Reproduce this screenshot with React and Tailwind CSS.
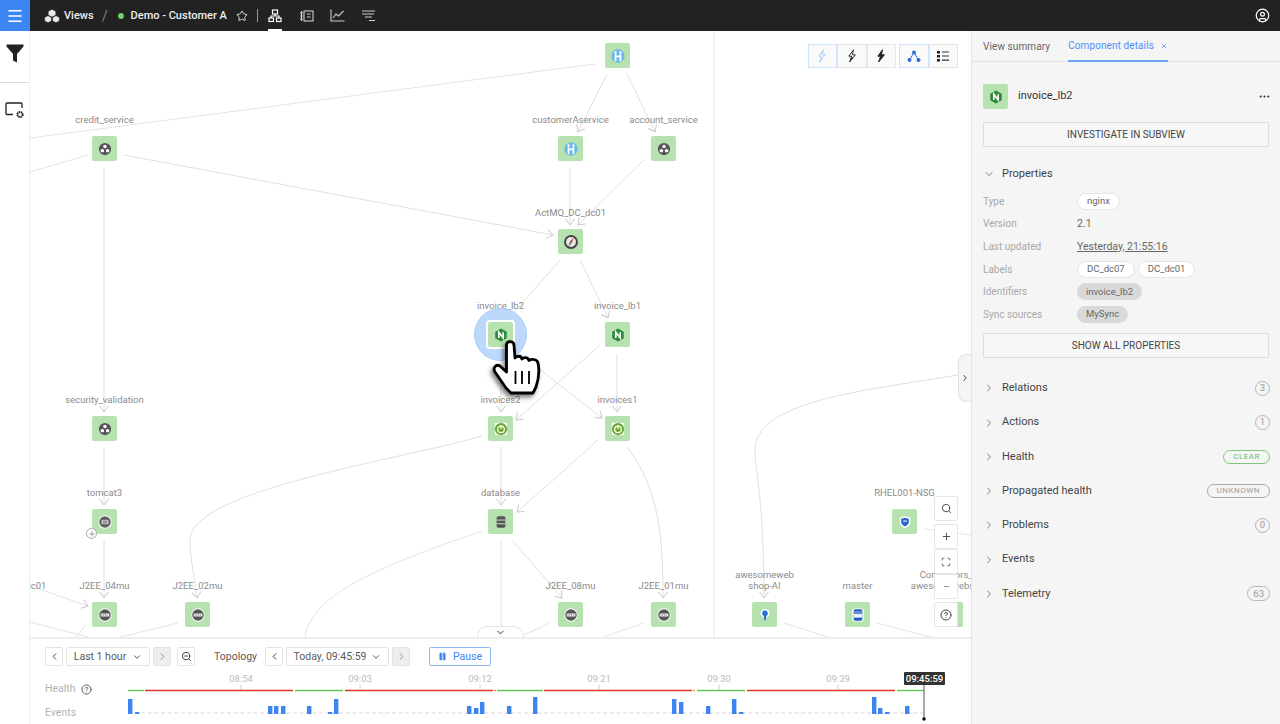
import React from 'react';
import { ChevronDown, ChevronLeft, ChevronRight, CircleHelp, CircleUser, Ellipsis, Menu, Minus, Pause, Plus, Scan, Search, Star, X, ZoomOut } from 'lucide-react';

// canvas origin on the page
const OX = 30;
const OY = 31;

const nodes = [
    { x: 617, y: 56, icon: 'people' },
    { x: 104, y: 149, icon: 'service', label: ['credit_service'] },
    { x: 570, y: 149, icon: 'people', label: ['customerAservice'] },
    { x: 663, y: 149, icon: 'service', label: ['account_service'] },
    { x: 570, y: 242, icon: 'compass', label: ['ActMQ_DC_dc01'] },
    { x: 500, y: 335, icon: 'nginx', label: ['invoice_lb2'], selected: true },
    { x: 617, y: 335, icon: 'nginx', label: ['invoice_lb1'] },
    { x: 104, y: 429, icon: 'service', label: ['security_validation'] },
    { x: 500, y: 429, icon: 'spring', label: ['invoices2'] },
    { x: 617, y: 429, icon: 'spring', label: ['invoices1'] },
    { x: 104, y: 522, icon: 'tomcat', label: ['tomcat3'], plus: true },
    { x: 500, y: 522, icon: 'database', label: ['database'] },
    { x: 904, y: 522, icon: 'shield', label: ['RHEL001-NSG'] },
    { x: 104, y: 615, icon: 'vm', label: ['J2EE_04mu'] },
    { x: 197, y: 615, icon: 'vm', label: ['J2EE_02mu'] },
    { x: 570, y: 615, icon: 'vm', label: ['J2EE_08mu'] },
    { x: 663, y: 615, icon: 'vm', label: ['J2EE_01mu'] },
    { x: 764, y: 615, icon: 'pin', label: ['awesomeweb', 'shop-AI'] },
    { x: 857, y: 615, icon: 'sql', label: ['master'] },
    { x: 950, y: 615, icon: 'pin', label: ['Connectors_AI', 'awesomewebshop'] },
    { x: 27, y: 615, label: ['DC_dc01'] },
];

const arrows = [
    'M607,74 L578,132', 'M627,74 L655,132', 'M570,168 L570,225', 'M645,159 L578,225', 'M124,155 L553,235',
    'M104,168 L104,412', 'M560,260 L509,318', 'M580,260 L608,318', 'M520,354 L602,418',
    'M600,345 L516,420', 'M617,354 L617,412', 'M501,354 L501,412', 'M104,447 L104,505', 'M104,540 L104,598',
    'M482,436 C400,460 190,490 190,540 C190,560 195,580 197,598', 'M501,447 L501,505', 'M598,440 L517,512',
    'M627,447 C660,490 663,540 663,598', 'M512,540 L562,598', 'M36,588 L88,606',
    'M958,375 C870,390 755,400 755,450 C755,470 764,500 764,598',
];

const plainLines = [
    'M30,138 L595,64', 'M30,172 L88,155', 'M501,540 L501,638', 'M482,531 C400,560 310,590 305,638', 'M30,622 L92,638', 'M86,625 L75,638',
    'M178,623 L117,638', 'M524,635 L550,623', 'M600,638 L644,623', 'M783,623 L832,638', 'M877,623 L934,638',
    'M924,529 L971,535', 'M714,31 L714,638',
];

const health = [
    ['#62c554', 128, 144], ['#e2352b', 145, 293], ['#62c554', 295, 343], ['#e2352b', 345, 493], ['#f0a030', 494, 496],
    ['#62c554', 497, 543], ['#e2352b', 544, 692], ['#f0a030', 693, 695], ['#62c554', 697, 745], ['#e2352b', 747, 895],
    ['#62c554', 897, 924],
];

const ticks = [[241, '08:54'], [360, '09:03'], [480, '09:12'], [599, '09:21'], [719, '09:30'], [838, '09:39']];

const bars = [
    [128, 15], [135, 2], [268, 8], [274, 8], [281, 8], [307, 8], [328, 2], [334, 15], [467, 8], [474, 6], [480, 12],
    [507, 8], [533, 17], [672, 15], [679, 12], [706, 8], [732, 15], [739, 2], [872, 17], [878, 6], [885, 2], [905, 8],
];

const sections = [
    { name: 'Relations', count: '3' },
    { name: 'Actions', count: '1' },
    { name: 'Health', status: 'CLEAR', green: true },
    { name: 'Propagated health', status: 'UNKNOWN' },
    { name: 'Problems', count: '0' },
    { name: 'Events' },
    { name: 'Telemetry', count: '63' },
];

function NodeIcon({ type, size = 14 }) {
    const props = { width: size, height: size, viewBox: '0 0 16 16' };
    switch (type) {
        case 'nginx':
            return (
                <svg {...props}>
                    <path d="M8 0.5 14.6 4.2 V11.8 L8 15.5 1.4 11.8 V4.2 Z" fill="#2e8b3d" />
                    <path d="M5.5 11.3 V4.8 L10.5 11.3 V4.8" fill="none" stroke="#fff" strokeWidth="1.9" />
                </svg>
            );
        case 'people':
            return (
                <svg {...props}>
                    <circle cx="8" cy="8" r="7.6" fill="#6db8ea" />
                    <circle cx="5.2" cy="4" r="1.4" fill="#fff" />
                    <circle cx="10.8" cy="4" r="1.4" fill="#fff" />
                    <path d="M5.2 6 V14 M10.8 6 V14 M5.2 8.5 H10.8" stroke="#fff" strokeWidth="2" fill="none" />
                </svg>
            );
        case 'service':
            return (
                <svg {...props}>
                    <circle cx="8" cy="8" r="7" fill="#555" />
                    <circle cx="8" cy="5" r="2" fill="#fff" />
                    <circle cx="5" cy="10" r="2" fill="#fff" />
                    <circle cx="11" cy="10" r="2" fill="#fff" />
                </svg>
            );
        case 'compass':
            return (
                <svg {...props}>
                    <circle cx="8" cy="8" r="6.8" fill="#e8e8e8" stroke="#444" strokeWidth="2.2" />
                    <path d="M11 3 L9 8.8 7 7.2 Z" fill="#d9302a" />
                    <path d="M5 13 L7 7.2 9 8.8 Z" fill="#666" />
                </svg>
            );
        case 'spring':
            return (
                <svg {...props}>
                    <rect x="1" y="1" width="14" height="14" fill="#fff" />
                    <circle cx="8" cy="8" r="7" fill="#6da82f" />
                    <circle cx="8" cy="8.4" r="3.8" fill="none" stroke="#fff" strokeWidth="1.4" />
                    <path d="M8 3.4 V8" stroke="#fff" strokeWidth="1.4" />
                </svg>
            );
        case 'tomcat':
            return (
                <svg {...props}>
                    <circle cx="8" cy="8" r="7.6" fill="#fff" />
                    <circle cx="8" cy="8" r="6.6" fill="#5d5d5d" />
                    <path d="M4 5.5 H12 V10.5 H4 Z" fill="#ccc" />
                    <path d="M5.5 7 H10.5 M5.5 9 H10.5" stroke="#555" strokeWidth="0.8" />
                </svg>
            );
        case 'vm':
            return (
                <svg {...props}>
                    <circle cx="8" cy="8" r="7.6" fill="#fff" />
                    <circle cx="8" cy="8" r="6.6" fill="#555" />
                    <rect x="3" y="6.3" width="10" height="3.4" fill="#eee" />
                    <path d="M4.5 7.3 V8.7 M6.5 7.3 V8.7 M8.5 7.3 V8.7 M10.5 7.3 V8.7" stroke="#555" strokeWidth="0.8" />
                </svg>
            );
        case 'database':
            return (
                <svg {...props}>
                    <rect x="3" y="1.5" width="10" height="13" rx="2" fill="#555" />
                    <path d="M3 5.8 H13 M3 10 H13" stroke="#e8e8e8" strokeWidth="1" />
                </svg>
            );
        case 'shield':
            return (
                <svg {...props}>
                    <path d="M8 1 14 3 V8 C14 11.5 11 14 8 15 5 14 2 11.5 2 8 V3 Z" fill="#fff" />
                    <path d="M8 3 12.4 4.4 V8 C12.4 10.5 10 12.4 8 13.2 6 12.4 3.6 10.5 3.6 8 V4.4 Z" fill="#2a66c8" />
                    <path d="M6 6 H10 V8 H6 Z" fill="#a8c8f0" />
                </svg>
            );
        case 'pin':
            return (
                <svg {...props}>
                    <circle cx="8" cy="6" r="5" fill="#fff" />
                    <path d="M8 2.6 A3.4 3.4 0 0 1 9.4 9 L8.8 14 H7.2 L6.6 9 A3.4 3.4 0 0 1 8 2.6 Z" fill="#2a6fd8" />
                </svg>
            );
        case 'sql':
            return (
                <svg {...props}>
                    <rect x="1.5" y="0.5" width="13" height="15" rx="3" fill="#fff" />
                    <rect x="3" y="1.5" width="10" height="13" rx="2" fill="#1f5fbf" />
                    <rect x="3" y="6.5" width="10" height="4.5" fill="#e8f0fb" />
                    <path d="M3 4.6 H13" stroke="#e8f0fb" strokeWidth="0.8" />
                </svg>
            );
        default:
            return null;
    }
}

function GraphNode({ node }) {
    return (
        <div className="absolute w-[25px] h-[25px]" style={{ left: node.x - OX - 12, top: node.y - OY - 13 }}>
            {node.label && (
                <div className="absolute bottom-[36px] left-1/2 -translate-x-1/2 whitespace-nowrap text-center text-[9.5px] leading-[11px] text-[#8b8b8b]">
                    {node.label.map((line) => <div key={line}>{line}</div>)}
                </div>
            )}
            {node.selected && <div className="absolute -left-[14px] -top-[14px] w-[53px] h-[53px] rounded-full bg-[#bcd9fb] border border-[#a9cdf8]" />}
            {node.icon && (
                <div className={`relative w-[25px] h-[25px] rounded-[2px] bg-[#b5e2ae] flex items-center justify-center ${node.selected ? 'outline-2 outline-white' : ''}`}>
                    <NodeIcon type={node.icon} />
                </div>
            )}
            {node.plus && (
                <div className="absolute -left-[6px] top-[19px] w-[11px] h-[11px] rounded-full bg-white border border-[#aaa] flex items-center justify-center">
                    <Plus size={8} className="text-[#777]" />
                </div>
            )}
        </div>
    );
}

function Hand() {
    return (
        <svg className="absolute drop-shadow-[-2px_3px_2px_rgba(0,0,0,0.5)]" style={{ left: 490 - OX, top: 339 - OY }} width="53" height="59" viewBox="490 339 53 59">
            <path
                d="M506.5,345 C506.5,340.5 513.5,340.5 514,345 L515,358 C517,355.5 521,355.5 522,359 C524,357 528,357 529,360.5 C531,358.5 537,359 538,363 C539.5,370 539,378 536,387 L533,393 L511,393 L506,388 L495,372 C492.5,368 496,363.5 500,366 L506.5,372 Z"
                fill="#fff"
                stroke="#000"
                strokeWidth="2.8"
                strokeLinejoin="round"
            />
            <path d="M515.5,371 V384 M522,371 V384 M529,371 V384" stroke="#000" strokeWidth="1.8" />
        </svg>
    );
}

function Graph() {
    return (
        <div className="relative flex-1 overflow-hidden bg-white border-b-2 border-[#eeeeee]">
            <svg className="absolute left-0 top-0" width="941" height="607" viewBox={`${OX} ${OY} 941 607`} fill="none">
                <defs>
                    <marker id="chev" markerUnits="userSpaceOnUse" markerWidth="12" markerHeight="12" refX="7" refY="6" orient="auto">
                        <path d="M1 1.5 L7 6 L1 10.5" fill="none" stroke="#c9c9c9" strokeWidth="1" />
                    </marker>
                </defs>
                {plainLines.map((d) => <path key={d} d={d} stroke="#e4e4e4" />)}
                {arrows.map((d) => <path key={d} d={d} stroke="#e0e0e0" markerEnd="url(#chev)" />)}
            </svg>
            {nodes.map((node) => <GraphNode key={node.label ? node.label[0] : 'top'} node={node} />)}
            <Hand />
            <div className="absolute right-[13px] top-[13px] flex gap-[3px]">
                <div className="flex h-[24px] rounded-[2px] bg-[#fafafa]">
                    <ToolButton active><Bolt color="#a9cbf8" outline /></ToolButton>
                    <ToolButton><Bolt color="#333" outline /></ToolButton>
                    <ToolButton><Bolt color="#222" /></ToolButton>
                </div>
                <div className="flex h-[24px] rounded-[2px] bg-[#fafafa]">
                    <ToolButton active>
                        <svg width="14" height="14" viewBox="0 0 14 14" fill="#2f6fd8"><circle cx="7" cy="3.5" r="2" /><circle cx="2.5" cy="11" r="2" /><circle cx="11.5" cy="11" r="2" /><path d="M7 3.5 L2.5 11 M7 3.5 L11.5 11" stroke="#2f6fd8" /></svg>
                    </ToolButton>
                    <ToolButton>
                        <svg width="14" height="14" viewBox="0 0 14 14"><path d="M1 2 H4 V4.5 H1 Z M1 6 H4 V8.5 H1 Z M1 10 H4 V12.5 H1 Z" fill="#222" /><path d="M6 3 H13 M6 7 H13 M6 11.2 H13" stroke="#333" strokeWidth="1.2" /></svg>
                    </ToolButton>
                </div>
            </div>
            <div className="absolute left-[904px] top-[465px] w-[24px] flex flex-col">
                <ZoomButton className="h-[25px] mb-[3px]"><Search size={11} /></ZoomButton>
                <ZoomButton className="h-[25px]"><Plus size={11} /></ZoomButton>
                <ZoomButton className="h-[25px]"><Scan size={10} /></ZoomButton>
                <ZoomButton className="h-[25px] mb-[3px]"><Minus size={7} /></ZoomButton>
                <ZoomButton className="h-[25px]"><CircleHelp size={12} /></ZoomButton>
            </div>
            <div className="absolute left-[447px] bottom-0 w-[47px] h-[11px] bg-white border border-b-0 border-[#e4e4e4] rounded-t-[10px] flex items-center justify-center">
                <ChevronDown size={11} className="text-[#222]" />
            </div>
            <div className="absolute right-0 top-[323px] w-[13px] h-[48px] bg-[#f5f5f5] border border-r-0 border-[#e4e4e4] rounded-l-[8px] flex items-center justify-center">
                <ChevronRight size={10} className="text-[#222]" />
            </div>
        </div>
    );
}

function Bolt({ color, outline }) {
    return (
        <svg width="12" height="14" viewBox="0 0 12 14">
            <path d="M7.5 0.8 L2.8 7.2 H5.6 L3.6 13 L9.4 5.8 H6.4 Z" fill={outline ? 'none' : color} stroke={color} strokeWidth="1" strokeLinejoin="round" />
            {outline && color === '#333' && <path d="M5.6 7.2 L3.6 13 L7 8.8 Z" fill={color} />}
        </svg>
    );
}

function ToolButton({ active, children }) {
    return (
        <div className={`w-[29.5px] h-[24px] flex items-center justify-center border ${active ? 'border-[#cfe3fb]' : 'border-[#e6e6e6]'}`}>
            {children}
        </div>
    );
}

function ZoomButton({ className, children }) {
    return (
        <div className={`w-[24px] bg-white border border-[#e6e6e6] rounded-[2px] flex items-center justify-center text-[#444] ${className}`}>
            {children}
        </div>
    );
}

function Header() {
    return (
        <div className="flex items-center h-[31px] shrink-0 bg-[#222222] text-white">
            <div className="w-[30px] h-[31px] bg-[#3d85f2] flex items-center justify-center">
                <Menu size={18} />
            </div>
            <svg className="ml-[14px]" width="16" height="14" viewBox="0 0 16 14" fill="#e8e8e8">
                <path d="M8 0.5 11.5 2.4 V6 L8 7.8 4.5 6 V2.4 Z" />
                <path d="M4 6.6 7.4 8.4 V12 L4 13.8 0.6 12 V8.4 Z" stroke="#222" strokeWidth="0.6" />
                <path d="M12 6.6 15.4 8.4 V12 L12 13.8 8.6 12 V8.4 Z" stroke="#222" strokeWidth="0.6" />
            </svg>
            <span className="ml-[4px] w-[29px] pt-[2px] text-[11px] font-medium text-[#eee]">Views</span>
            <span className="ml-[9px] pt-[1px] text-[14px] font-light text-[#aaa]">/</span>
            <span className="ml-[10px] w-[6px] h-[6px] rounded-full bg-[#6fcf6a]" />
            <span className="ml-[7px] w-[96px] pt-[2px] text-[11px] font-medium text-[#eee] whitespace-nowrap">Demo - Customer A</span>
            <Star size={12} className="ml-[9px] text-[#ddd]" />
            <span className="ml-[9px] w-px h-[13px] bg-[#999]" />
            <div className="relative ml-[10px] h-[31px] flex items-center">
                <svg width="14" height="14" viewBox="0 0 14 14" fill="none" stroke="#fff" strokeWidth="1.2">
                    <rect x="4.5" y="1" width="5" height="4" />
                    <rect x="1" y="9" width="4.5" height="3.5" />
                    <rect x="8.5" y="9" width="4.5" height="3.5" />
                    <path d="M7 5 V7 M3 9 V7 H11 V9" />
                </svg>
                <span className="absolute left-0 right-0 bottom-0 h-[2px] bg-white" />
            </div>
            <svg className="ml-[17px]" width="15" height="12" viewBox="0 0 15 12" fill="none" stroke="#ccc" strokeWidth="1.1">
                <rect x="5" y="1" width="9" height="10" />
                <path d="M8 4 H11.5 M8 7 H11.5 M1 3 H4 M1 6 H4 M1 9 H4 M2.5 1 V11" />
            </svg>
            <svg className="ml-[16px]" width="15" height="13" viewBox="0 0 15 13" fill="none" stroke="#ccc" strokeWidth="1.1">
                <path d="M1 0.5 V12 H14.5 M3 9 L6 5 L8.5 7 L13.5 2" />
            </svg>
            <svg className="ml-[16px]" width="15" height="12" viewBox="0 0 15 12" fill="none" stroke="#ccc" strokeWidth="1.2">
                <path d="M1 1 H14 M1 4 H13 M4 7 H11 M8 10.5 H14" />
            </svg>
            <CircleUser size={15} className="ml-auto mr-[10px]" />
        </div>
    );
}

function Rail() {
    return (
        <div className="w-[30px] shrink-0 bg-white border-r border-[#f0f0f0] flex flex-col items-center">
            <div className="h-[52px] w-full border-b border-[#dddddd] flex justify-center pt-[13px]">
                <svg width="18" height="19" viewBox="0 0 18 19" fill="#222"><path d="M0.5 0.5 H17.5 V2.5 L11 10 V18.5 L7 16.5 V10 L0.5 2.5 Z" /></svg>
            </div>
            <svg className="mt-[19px]" width="20" height="17" viewBox="0 0 20 17" fill="none">
                <path d="M8 12.5 H2 Q1 12.5 1 11.5 V2 Q1 1 2 1 H16 Q17 1 17 2 V6" stroke="#222" strokeWidth="1.3" />
                <circle cx="15" cy="12.5" r="2.6" stroke="#222" strokeWidth="2" strokeDasharray="1.5 0.6" />
            </svg>
        </div>
    );
}

function NavButton({ disabled, children }) {
    return (
        <div className={`w-[18px] h-[19px] rounded-[2px] border border-[#e4e4e4] flex items-center justify-center ${disabled ? 'bg-[#eeeeee] text-[#888]' : 'bg-white text-[#333]'}`}>
            {children}
        </div>
    );
}

function Timeline() {
    return (
        <div className="h-[85px] shrink-0 bg-white">
            <div className="flex items-center pl-[15px] pt-[8px] h-[27px] text-[10.5px] text-[#5a5a5a]">
                <NavButton><ChevronLeft size={11} /></NavButton>
                <div className="ml-[3px] w-[84px] h-[19px] rounded-[2px] border border-[#e4e4e4] flex items-center justify-center gap-[6px]">
                    Last 1 hour <ChevronDown size={10} className="text-[#333]" />
                </div>
                <div className="ml-[3px]"><NavButton disabled><ChevronRight size={11} /></NavButton></div>
                <div className="ml-[6px]"><NavButton><ZoomOut size={11} /></NavButton></div>
                <span className="ml-[19px] w-[42px]">Topology</span>
                <div className="ml-[9px]"><NavButton><ChevronLeft size={11} /></NavButton></div>
                <div className="ml-[3px] w-[103px] h-[19px] rounded-[2px] border border-[#e4e4e4] flex items-center justify-center gap-[5px] whitespace-nowrap">
                    Today, 09:45:59 <ChevronDown size={10} className="text-[#333]" />
                </div>
                <div className="ml-[3px]"><NavButton disabled><ChevronRight size={11} /></NavButton></div>
                <div className="ml-[19px] w-[62px] h-[19px] rounded-[2px] border border-[#8db8f5] text-[#3d85f2] flex items-center justify-center gap-[6px]">
                    <Pause size={9} fill="#3d85f2" /> Pause
                </div>
            </div>
            <div className="flex mt-[2px]">
                <div className="w-[98px] pl-[15px] text-[10.5px] text-[#b3b3b3]">
                    <div className="flex items-center gap-[5px] mt-[14px] h-[14px]">
                        Health <CircleHelp size={11} className="text-[#555]" />
                    </div>
                    <div className="mt-[9px]">Events</div>
                </div>
                <svg width="822" height="56" viewBox="128 668 822 56" fontFamily="Roboto, sans-serif">
                    <line x1="128" x2="924" y1="713" y2="713" stroke="#d8d8d8" strokeDasharray="4 2.6" />
                    {health.map(([color, a, b]) => <line key={a} x1={a} x2={b} y1="690.5" y2="690.5" stroke={color} strokeWidth="1.4" />)}
                    {ticks.map(([x, t]) => (
                        <g key={t}>
                            <line x1={x} x2={x} y1="685" y2="690" stroke="#ccc" />
                            <text x={x} y="682" textAnchor="middle" fontSize="9.5" fill="#bbb">{t}</text>
                        </g>
                    ))}
                    {bars.map(([x, h]) => <rect key={x} x={x} y={714 - h} width="4.4" height={h} fill="#3d85f2" />)}
                    <line x1="924" x2="924" y1="685" y2="719" stroke="#555" />
                    <circle cx="924" cy="719" r="1.8" fill="#111" />
                    <rect x="904" y="672" width="41" height="13" rx="1" fill="#333" />
                    <text x="924.5" y="682" textAnchor="middle" fontSize="9.5" fontWeight="500" fill="#fff">09:45:59</text>
                </svg>
            </div>
        </div>
    );
}

function Chip({ filled, children }) {
    return (
        <span className={`inline-flex h-[17px] items-center rounded-full px-[9px] text-[9.5px] text-[#666] ${filled ? 'bg-[#d9d9d9]' : 'bg-white border border-[#e4e4e4]'}`}>
            {children}
        </span>
    );
}

function PropRow({ name, children }) {
    return (
        <div className="flex items-center h-[22.6px]">
            <div className="w-[94px] text-[10px] text-[#a8a8a8]">{name}</div>
            <div className="flex gap-[3px] text-[10.5px] text-[#666]">{children}</div>
        </div>
    );
}

function WideButton({ className, children }) {
    return (
        <div className={`w-[286px] flex items-center justify-center rounded-[1px] border border-[#dedede] bg-[#f7f7f7] text-[10px] text-[#444] ${className}`}>
            {children}
        </div>
    );
}

function Badge({ section }) {
    if (section.count) {
        return (
            <span className={`min-w-[15px] h-[15px] rounded-full border border-[#b5b5b5] flex items-center justify-center text-[9.5px] text-[#999] ${section.count.length > 1 ? 'px-[5px]' : ''}`}>
                {section.count}
            </span>
        );
    }
    if (section.status) {
        return (
            <span className={`h-[14px] px-[9px] rounded-full border flex items-center text-[8px] tracking-[0.5px] ${section.green ? 'border-[#7cc97c] text-[#6dbb6d]' : 'border-[#a9a9ad] text-[#9d9da3]'}`}>
                {section.status}
            </span>
        );
    }
    return null;
}

function Panel() {
    return (
        <div className="w-[309px] shrink-0 bg-[#f5f5f5] border-l border-[#e4e4e4] flex flex-col">
            <div className="flex h-[31px] pl-[11px] border-b border-[#e2e2e2] text-[10px] tracking-[0.1px] whitespace-nowrap">
                <div className="flex items-center text-[#666]">View summary</div>
                <div className="ml-[18px] w-[100px] flex items-center gap-[6px] text-[#4b90f5] border-b-2 border-[#6aa5f7] -mb-px">
                    Component details <X size={8} strokeWidth={2} />
                </div>
            </div>
            <div className="pl-[11px] pr-[10px] pt-[22px]">
                <div className="flex items-center h-[25px]">
                    <div className="w-[25px] h-[25px] rounded-[2px] bg-[#b5e2ae] flex items-center justify-center"><NodeIcon type="nginx" /></div>
                    <span className="ml-[10px] text-[11px] text-[#333]">invoice_lb2</span>
                    <Ellipsis size={13} className="ml-auto mr-[-1px] text-[#333]" />
                </div>
                <WideButton className="mt-[13px] h-[25px]">INVESTIGATE IN SUBVIEW</WideButton>
                <div className="flex items-center h-[16px] mt-[19px] text-[11px] text-[#444]">
                    <ChevronDown size={12} strokeWidth={1.5} className="text-[#555]" />
                    <span className="ml-[7px]">Properties</span>
                </div>
                <div className="mt-[8px]">
                    <PropRow name="Type"><Chip>nginx</Chip></PropRow>
                    <PropRow name="Version">2.1</PropRow>
                    <PropRow name="Last updated"><span className="underline">Yesterday, 21:55:16</span></PropRow>
                    <PropRow name="Labels"><Chip>DC_dc07</Chip><Chip>DC_dc01</Chip></PropRow>
                    <PropRow name="Identifiers"><Chip filled>invoice_lb2</Chip></PropRow>
                    <PropRow name="Sync sources"><Chip filled>MySync</Chip></PropRow>
                </div>
                <WideButton className="mt-[7px] h-[25px]">SHOW ALL PROPERTIES</WideButton>
                <div className="mt-[13.5px]">
                    {sections.map((section) => (
                        <div key={section.name} className="flex items-center h-[34.3px] text-[11px] text-[#444]">
                            <ChevronRight size={12} strokeWidth={1.5} className="text-[#555]" />
                            <span className="ml-[7px]">{section.name}</span>
                            <span className="ml-auto"><Badge section={section} /></span>
                        </div>
                    ))}
                </div>
            </div>
        </div>
    );
}

export default function App() {
    return (
        <div className="h-[724px] w-[1280px] overflow-hidden flex flex-col bg-white font-[family-name:Roboto,sans-serif]">
            <Header />
            <div className="flex flex-1 min-h-0">
                <Rail />
                <div className="flex-1 min-w-0 flex flex-col">
                    <Graph />
                    <Timeline />
                </div>
                <Panel />
            </div>
        </div>
    );
}
